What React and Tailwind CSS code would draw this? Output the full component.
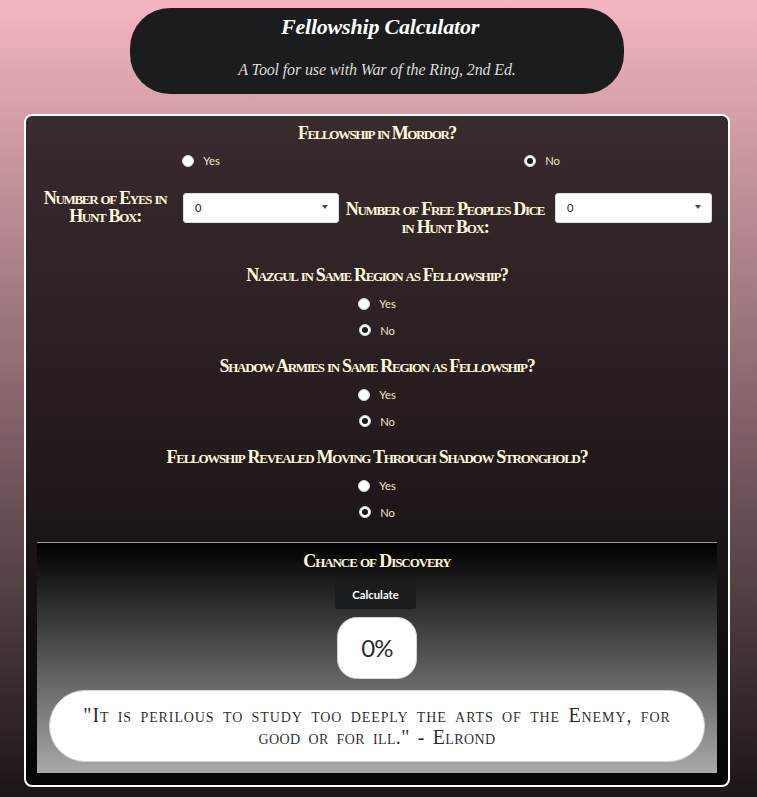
import React, { useState } from "react";

function Heading({ children, className = "tracking-[-1.3px]" }) {
  return (
    <h4
      className={`whitespace-nowrap text-center font-['Liberation_Serif',serif] text-[18px] font-bold leading-[18px] text-[#fff8dc] [font-variant:small-caps] ${className}`}
    >
      {children}
    </h4>
  );
}

function Radio({ label, checked, onSelect }) {
  return (
    <button
      type="button"
      role="radio"
      aria-checked={checked}
      onClick={onSelect}
      className="flex h-[13px] items-center text-[11.2px] leading-[13px] text-[#f5e6cc]"
    >
      <span className="mr-[9px] flex size-3 items-center justify-center rounded-full border border-[#d4d4d5] bg-white">
        {checked && <span className="size-1.5 rounded-full bg-[#1b1c1d]" />}
      </span>
      {label}
    </button>
  );
}

function Select() {
  return (
    <button
      type="button"
      className="flex h-[30px] items-center justify-between rounded-[3px] border border-[#dededf] bg-white pr-2.5 pl-[11px] text-[11.2px] text-black/90"
    >
      0
      <span className="mb-[3px] border-x-[3.5px] border-t-4 border-x-transparent border-t-[#4a4a4a]" />
    </button>
  );
}

function Question({ title, titleClass }) {
  const [yes, setYes] = useState(false);
  return (
    <section className="flex h-[91px] flex-col items-center">
      <Heading className={titleClass}>{title}</Heading>
      <div className="mt-[13px] flex flex-col items-center gap-[13.5px]">
        <Radio label="Yes" checked={yes} onSelect={() => setYes(true)} />
        <Radio label="No" checked={!yes} onSelect={() => setYes(false)} />
      </div>
    </section>
  );
}

export default function App() {
  const [mordor, setMordor] = useState(false);
  return (
    <main className="flex h-[797px] w-[757px] flex-col overflow-hidden bg-linear-to-b/srgb from-[#f4b6c2] to-[#1b1516] pt-2 pl-6 font-[Lato,sans-serif]">
      <header className="ml-[106px] flex h-[86px] w-[494px] flex-col items-center rounded-[40px] bg-[#1b1c1d] font-['Liberation_Serif',serif] whitespace-nowrap">
        <h1 className="mt-[7px] ml-1.5 text-[22px] leading-6 font-bold tracking-[-0.2px] text-white italic">Fellowship Calculator</h1>
        <p className="mt-[21px] text-[16px] leading-5 tracking-[-0.13px] text-[#dcdcdc] italic">A Tool for use with War of the Ring, 2nd Ed.</p>
      </header>

      <div className="mt-5 flex h-[673px] w-[706px] flex-col rounded-lg border-2 border-white bg-linear-to-b/srgb from-[#3a2b2d] via-[#231a1c] to-[#050505] px-[11px]">
        <Heading className="mt-2 tracking-[-1.45px]">Fellowship in Mordor?</Heading>
        <div className="mt-3 grid grid-cols-2">
          <div className="flex justify-center pr-3">
            <Radio label="Yes" checked={mordor} onSelect={() => setMordor(true)} />
          </div>
          <div className="flex justify-center pr-2.5">
            <Radio label="No" checked={!mordor} onSelect={() => setMordor(false)} />
          </div>
        </div>

        <div className="mt-[26px] grid h-[73px] grid-cols-[146px_156px_216px_157px] items-start">
          <Heading className="-mt-1 pr-2.5 tracking-[-1.3px]">
            Number of Eyes in
            <br />
            Hunt Box:
          </Heading>
          <Select />
          <Heading className="mt-[7px] pr-1 tracking-[-1.3px]">
            Number of Free Peoples Dice
            <br />
            in Hunt Box:
          </Heading>
          <Select />
        </div>

        <Question title="Nazgul in Same Region as Fellowship?" titleClass="tracking-[-1.32px]" />
        <Question title="Shadow Armies in Same Region as Fellowship?" titleClass="tracking-[-1.3px]" />
        <Question title="Fellowship Revealed Moving Through Shadow Stronghold?" titleClass="tracking-[-1.26px]" />

        <section className="mt-[3px] flex h-[231px] flex-col items-center border-t border-[#a0a0a0] bg-linear-to-b/srgb from-black to-[#a9a9a9] px-3">
          <Heading className="mt-[9px] tracking-[-1.1px]">Chance of Discovery</Heading>
          <button
            type="button"
            className="mt-[11px] mr-[3px] h-7 w-[81px] rounded-[3px] bg-[#1b1c1d] pt-px text-[11.3px] font-bold text-white"
          >
            Calculate
          </button>
          <output className="mt-2 flex h-[62px] w-20 items-center justify-center rounded-[20px] border border-[#d4d4d5] bg-white text-[24px] tracking-[-0.8px] text-black/85">
            0%
          </output>
          <blockquote className="mt-[11px] flex h-[72px] w-full shrink-0 flex-col justify-center rounded-[36px] border border-[#d4d4d5] bg-white text-center font-['Liberation_Serif',serif] text-[20px] leading-[22px] whitespace-nowrap text-black/85 [font-variant:small-caps]">
            <span className="tracking-[0.9px] [word-spacing:2.5px]">"It is perilous to study too deeply the arts of the Enemy, for</span>
            <span className="tracking-[0.4px] [word-spacing:2.5px]">good or for ill." - Elrond</span>
          </blockquote>
        </section>
      </div>
    </main>
  );
}
